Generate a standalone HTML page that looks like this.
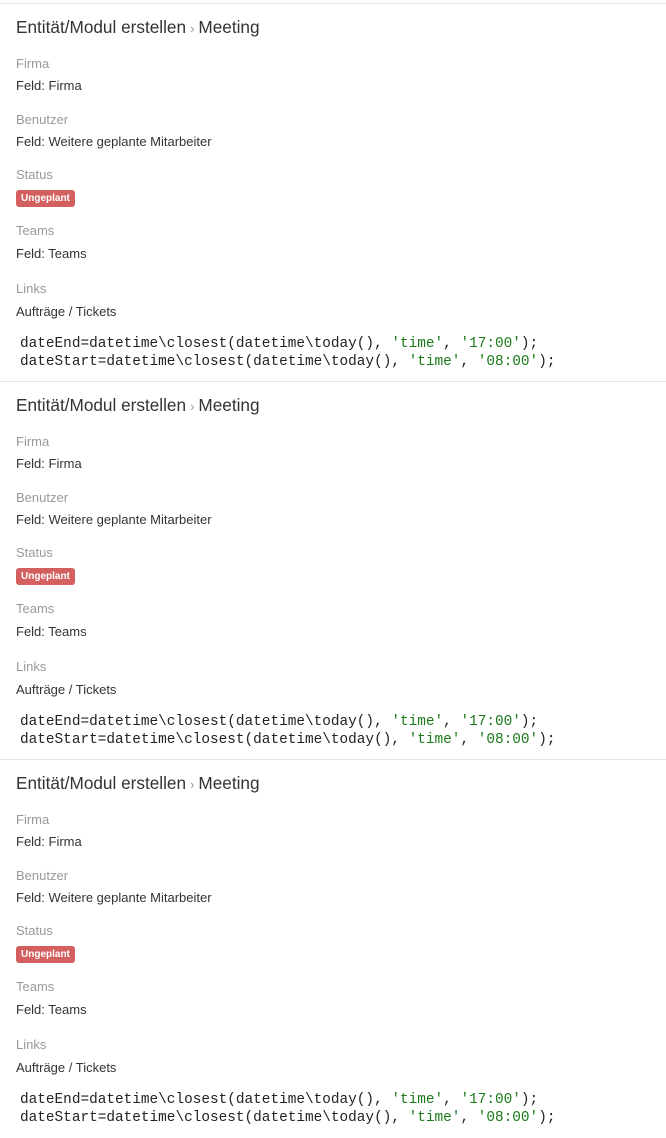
<!DOCTYPE html>
<html><head><meta charset="utf-8"><style>
html,body{margin:0;padding:0;background:#fff;width:666px;height:1137px;overflow:hidden}
body{font-family:"Liberation Sans",sans-serif;color:#333}
.b{position:absolute;left:0;width:666px;height:378px;border-top:1px solid #e5e5e5}
.b div{position:absolute;left:16px;white-space:nowrap}
.t{font-size:17.2px;line-height:22px;color:#333}
.t span{color:#999;font-size:13px;margin:0 4px}
.l{font-size:13px;line-height:18px;color:#999}
.v{font-size:13px;line-height:18px;color:#333}
.badge{background:#d45f5f;color:#fff;font-size:10px;font-weight:bold;line-height:17px;height:17px;padding:0 5px;border-radius:3px}
.c{font-family:"Liberation Mono",monospace;font-size:14.4px;line-height:18px;color:#222;left:20px!important}
.s{color:#1a7a1a}
</style></head><body>
<div class="b" style="top:3px">
<div class="t" style="top:12px">Entität/Modul erstellen<span>›</span>Meeting</div>
<div class="l" style="top:51px">Firma</div>
<div class="v" style="top:73px">Feld: Firma</div>
<div class="l" style="top:107px">Benutzer</div>
<div class="v" style="top:129px">Feld: Weitere geplante Mitarbeiter</div>
<div class="l" style="top:162px">Status</div>
<div class="badge" style="top:186px">Ungeplant</div>
<div class="l" style="top:218px">Teams</div>
<div class="v" style="top:241px">Feld: Teams</div>
<div class="l" style="top:276px">Links</div>
<div class="v" style="top:299px">Aufträge / Tickets</div>
<div class="c" style="top:331px">dateEnd=datetime\closest(datetime\today(), <span class="s">'time'</span>, <span class="s">'17:00'</span>);<br>dateStart=datetime\closest(datetime\today(), <span class="s">'time'</span>, <span class="s">'08:00'</span>);</div>
</div>
<div class="b" style="top:381px">
<div class="t" style="top:12px">Entität/Modul erstellen<span>›</span>Meeting</div>
<div class="l" style="top:51px">Firma</div>
<div class="v" style="top:73px">Feld: Firma</div>
<div class="l" style="top:107px">Benutzer</div>
<div class="v" style="top:129px">Feld: Weitere geplante Mitarbeiter</div>
<div class="l" style="top:162px">Status</div>
<div class="badge" style="top:186px">Ungeplant</div>
<div class="l" style="top:218px">Teams</div>
<div class="v" style="top:241px">Feld: Teams</div>
<div class="l" style="top:276px">Links</div>
<div class="v" style="top:299px">Aufträge / Tickets</div>
<div class="c" style="top:331px">dateEnd=datetime\closest(datetime\today(), <span class="s">'time'</span>, <span class="s">'17:00'</span>);<br>dateStart=datetime\closest(datetime\today(), <span class="s">'time'</span>, <span class="s">'08:00'</span>);</div>
</div>
<div class="b" style="top:759px">
<div class="t" style="top:12px">Entität/Modul erstellen<span>›</span>Meeting</div>
<div class="l" style="top:51px">Firma</div>
<div class="v" style="top:73px">Feld: Firma</div>
<div class="l" style="top:107px">Benutzer</div>
<div class="v" style="top:129px">Feld: Weitere geplante Mitarbeiter</div>
<div class="l" style="top:162px">Status</div>
<div class="badge" style="top:186px">Ungeplant</div>
<div class="l" style="top:218px">Teams</div>
<div class="v" style="top:241px">Feld: Teams</div>
<div class="l" style="top:276px">Links</div>
<div class="v" style="top:299px">Aufträge / Tickets</div>
<div class="c" style="top:331px">dateEnd=datetime\closest(datetime\today(), <span class="s">'time'</span>, <span class="s">'17:00'</span>);<br>dateStart=datetime\closest(datetime\today(), <span class="s">'time'</span>, <span class="s">'08:00'</span>);</div>
</div>
</body></html>
